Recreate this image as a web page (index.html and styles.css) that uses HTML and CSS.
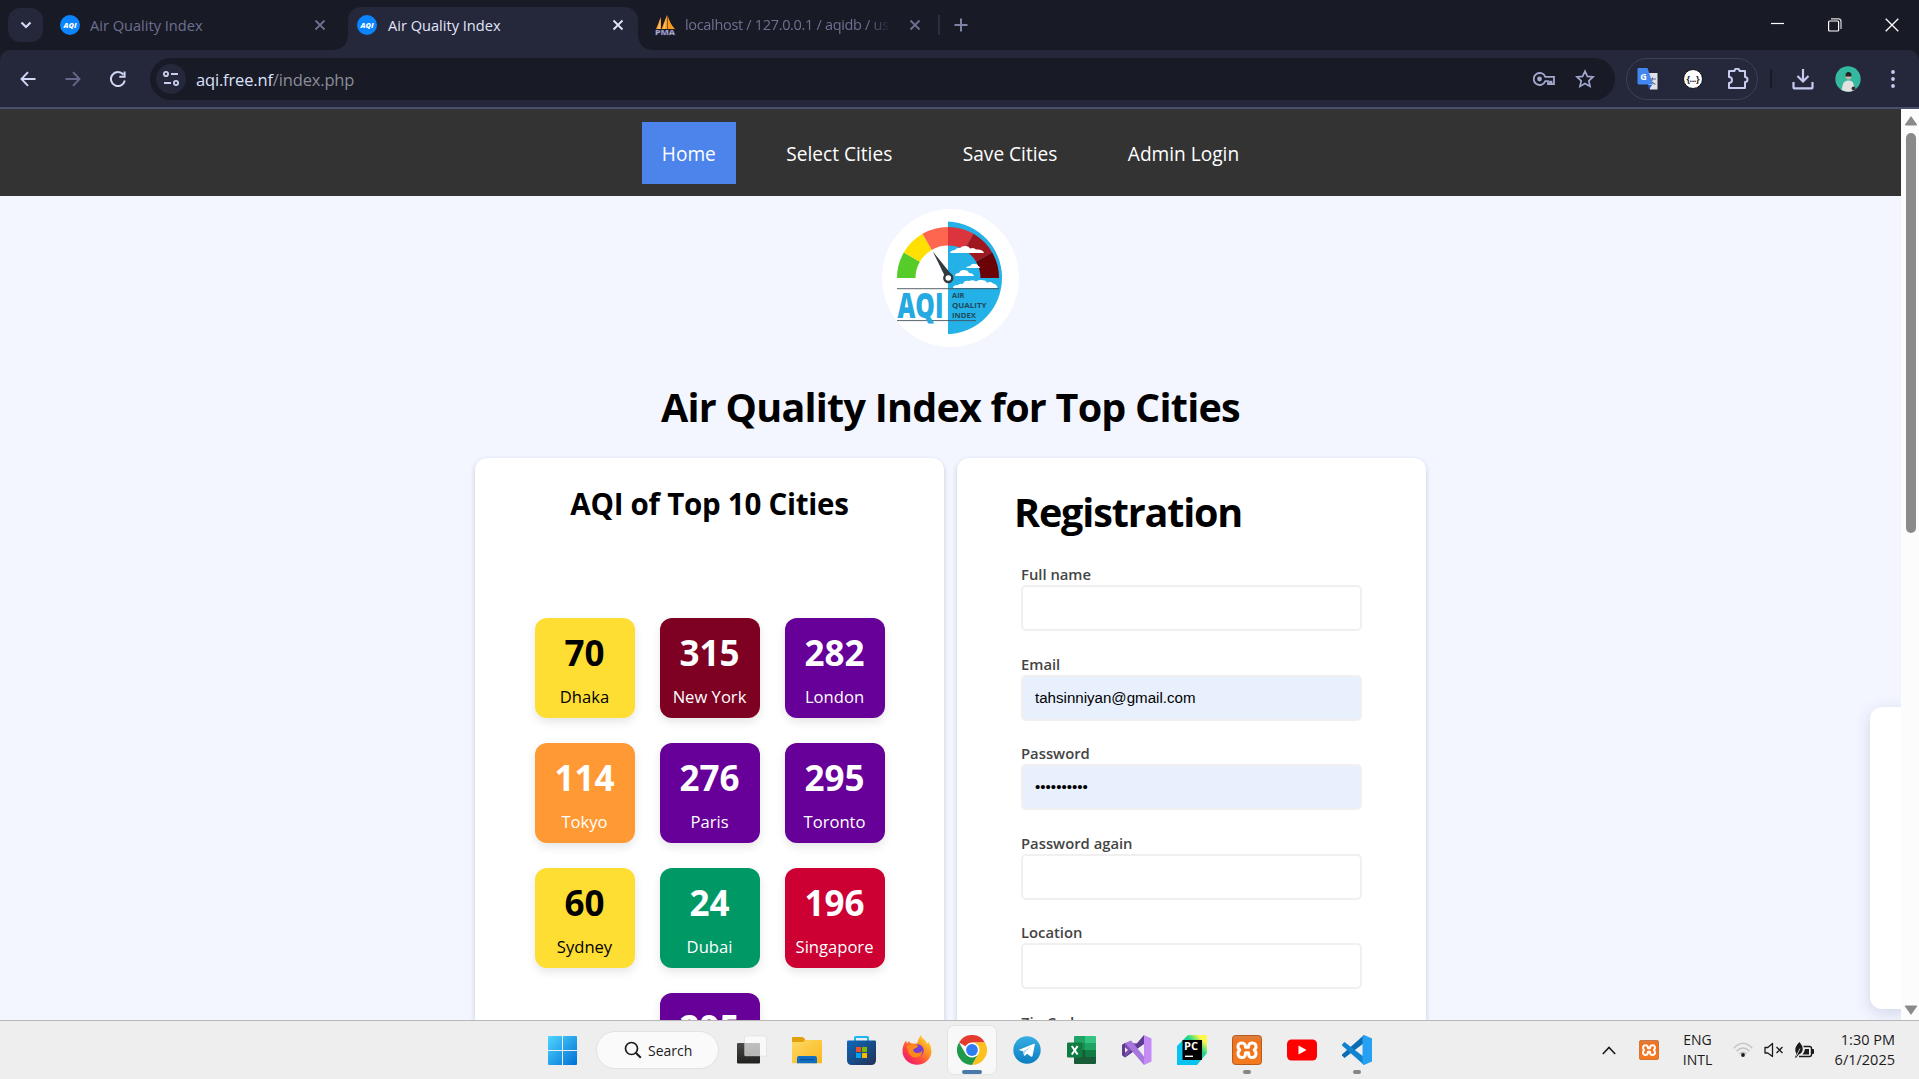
FILE: index.html
```html
<!DOCTYPE html>
<html lang="en">
<head>
<meta charset="utf-8">
<title>Air Quality Index</title>
<link rel="stylesheet" href="styles.css">
</head>
<body>
<svg class="defs" width="0" height="0">
  <defs>
    <linearGradient id="win" x1="0" y1="0" x2="1" y2="1"><stop offset="0" stop-color="#4fd6ff"/><stop offset="1" stop-color="#006fd6"/></linearGradient>
    <linearGradient id="tvb" x1="0" y1="0" x2="0" y2="1"><stop offset="0" stop-color="#4a4a48"/><stop offset="1" stop-color="#20201e"/></linearGradient>
    <linearGradient id="folder" x1="0" y1="0" x2="1" y2="1"><stop offset="0" stop-color="#ffd965"/><stop offset="1" stop-color="#f9b61c"/></linearGradient>
    <linearGradient id="store" x1="0" y1="0" x2="1" y2="1"><stop offset="0" stop-color="#0b69bd"/><stop offset="1" stop-color="#243156"/></linearGradient>
    <linearGradient id="fox" x1="1" y1="0" x2="0.2" y2="1"><stop offset="0" stop-color="#fff04a"/><stop offset=".4" stop-color="#ff9a1f"/><stop offset=".75" stop-color="#ff3c46"/><stop offset="1" stop-color="#e81b78"/></linearGradient>
    <linearGradient id="tg" x1="0" y1="0" x2="0" y2="1"><stop offset="0" stop-color="#38aee4"/><stop offset="1" stop-color="#0c7dc0"/></linearGradient>
    <linearGradient id="pc" x1="0" y1="1" x2="1" y2="0"><stop offset="0.35" stop-color="#07c3f2"/><stop offset=".65" stop-color="#21d789"/><stop offset=".85" stop-color="#fcf84a"/></linearGradient>
    <linearGradient id="xa" x1="0" y1="0" x2="0" y2="1"><stop offset="0" stop-color="#d9824a"/><stop offset=".2" stop-color="#f0711c"/><stop offset="1" stop-color="#f47a20"/></linearGradient>
    <symbol id="fav" viewBox="0 0 20 20"><circle cx="10" cy="10" r="10" fill="#0a84ff"/><text x="3.500" y="12.600" class="fav-text" textLength="13" lengthAdjust="spacingAndGlyphs">AQI</text></symbol>
    <symbol id="x" viewBox="0 0 12 12"><path d="M1.500 1.500l9 9m0-9l-9 9" stroke="currentColor" stroke-width="1.800"/></symbol>
    <symbol id="xampp" viewBox="0 0 30 30"><rect x=".5" y=".5" width="29" height="29" rx="3" fill="url(#xa)" stroke="#b9591a"/><path d="M9.800 8c-4.200 0-5 4.500-2 7-3 2.500-2.200 7.500 2 7.500 2.900 0 3.700-1.500 3.700-4.800h3c0 3.300.8 4.800 3.700 4.800 4.200 0 5-5 2-7.500 3-2.500 2.200-7-2-7-2.900 0-3.700 1.500-3.700 4.300h-3c0-2.800-.8-4.300-3.700-4.300z" fill="none" stroke="#fff" stroke-width="3" stroke-linejoin="round"/></symbol>
  </defs>
</svg>

<header class="browser">
  <div class="tabstrip">
    <div class="tab-menu"><svg width="12" height="8" viewBox="0 0 12 8"><path d="M1.500 1.500L6 6l4.500-4.500" fill="none" stroke="#d3d8f5" stroke-width="2.200"/></svg></div>
    <div class="tab tab-first"><svg class="fav"><use href="#fav"/></svg><span class="tab-title">Air Quality Index</span><svg class="tab-x"><use href="#x"/></svg></div>
    <div class="tab tab-active"><svg class="fav"><use href="#fav"/></svg><span class="tab-title">Air Quality Index</span><svg class="tab-x"><use href="#x"/></svg></div>
    <div class="tab tab-third">
      <svg class="fav" viewBox="0 0 20 20"><path d="M6 2L1 14h5zM12 0L6.500 14H12zM12.500 0v14H20q-5-5-7.500-14z" fill="#f79a1e"/><path d="M5 4L3 14h2zM11 3L8 14h2z" fill="#fcc477"/><text x="0" y="19.600" class="pma-text" textLength="20" lengthAdjust="spacingAndGlyphs">PMA</text></svg>
      <span class="tab-title tab-title-fade">localhost / 127.0.0.1 / aqidb / us</span><svg class="tab-x"><use href="#x"/></svg>
    </div>
    <i class="tab-sep"></i>
    <svg class="new-tab" width="14" height="14" viewBox="0 0 14 14"><path d="M7 .5v13M.5 7h13" stroke="#7f83a5" stroke-width="2"/></svg>
    <div class="win-controls">
      <svg width="14" height="14" viewBox="0 0 14 14"><path d="M0 5.500h13" stroke="#fff" stroke-width="1.200"/></svg>
      <svg width="14" height="14" viewBox="0 0 14 14"><rect x=".6" y="3" width="10" height="10" rx="1" fill="none" stroke="#fff" stroke-width="1.200"/><path d="M3 .8h7.500q2.500 0 2.500 2.500V11" fill="none" stroke="#ddd" stroke-width="1.200"/></svg>
      <svg width="14" height="14" viewBox="0 0 14 14"><path d="M.7.7l12.600 12.600m0-12.600L.7 13.300" stroke="#fff" stroke-width="1.300"/></svg>
    </div>
  </div>
  <div class="toolbar">
    <div class="nav-icons">
      <svg width="16" height="16" viewBox="0 0 16 16"><path d="M15.500 8H1.800M8 1.200L1.500 8 8 14.800" fill="none" stroke="#d0d6f5" stroke-width="1.900"/></svg>
      <svg width="16" height="16" viewBox="0 0 16 16"><path d="M.5 8h13.700M8 1.200L14.500 8 8 14.800" fill="none" stroke="#64688a" stroke-width="1.900"/></svg>
      <svg width="16" height="16" viewBox="0 0 16 16"><path d="M13.300 3.500A7 7 0 1 0 14.800 9.500M14.600 .5v5.200H9.300" fill="none" stroke="#d0d6f5" stroke-width="2"/></svg>
    </div>
    <div class="omnibox">
      <span class="site-btn"><svg width="16" height="15" viewBox="0 0 16 15"><g fill="none" stroke="#c6cceb" stroke-width="1.900"><circle cx="3" cy="3" r="2.100"/><path d="M8 3h7M1 12h7"/><circle cx="13" cy="12" r="2.100"/></g></svg></span>
      <span class="url">aqi.free.nf<span class="path">/index.php</span></span>
      <svg class="key" width="23" height="14" viewBox="0 0 23 14"><g fill="none" stroke="#a2a7cc" stroke-width="1.800"><path d="M12.300 4.800A6 6 0 1 0 12.300 9.200H15v3h2v-2.500h1.500v2.500H21V4.800z"/></g><circle cx="6.500" cy="7" r="2.400" fill="#a2a7cc"/></svg>
      <svg width="20" height="20" viewBox="0 0 20 20"><path d="M10 2.200l2.400 5.200 5.600.6-4.200 3.800 1.200 5.600L10 14.500l-5 2.900 1.200-5.600L2 8l5.600-.6z" fill="none" stroke="#a2a7cc" stroke-width="1.700"/></svg>
    </div>
    <div class="ext-pill">
      <svg width="22" height="22" viewBox="0 0 22 22"><path d="M8 5h12.500v16.500H13z" fill="#dfe1e6"/><path d="M12 11h7M15.500 9.500V11q-.5 3-3 5M13.500 12q2 3.500 5 4.500" fill="none" stroke="#60708a" stroke-width="1.200"/><path d="M1 0h9.500L16 16.500H2q-1.500 0-1.500-1.500V1z" fill="#4286f0"/><path d="M11 17h4l-3 4.500z" fill="#2a52c8"/><text x="3.200" y="12" class="g-text">G</text></svg>
      <svg width="20" height="20" viewBox="0 0 20 20"><circle cx="10" cy="10" r="9.500" fill="#fff" stroke="#111"/><text x="3.500" y="13.200" class="brace" textLength="13">{...}</text></svg>
      <svg width="22" height="22" viewBox="0 0 22 22"><path d="M2 3h5.500c0-3 5-3 5 0H18v6c3.300 0 3.300 5 0 5v6H2v-5c4 0 4-6 0-6z" fill="none" stroke="#c6cbf0" stroke-width="2" stroke-linejoin="round"/></svg>
    </div>
    <i class="bar-sep"></i>
    <svg class="download" width="22" height="22" viewBox="0 0 22 22"><path d="M11 1v12M5.500 8l5.500 5.500L16.500 8M1.500 14v5.500q0 .8.800.8h17.400q.8 0 .8-.8V14" fill="none" stroke="#c6cbf0" stroke-width="2.200"/></svg>
    <svg class="avatar" width="26" height="26" viewBox="0 0 26 26"><circle cx="13" cy="13" r="12.700" fill="#35b8a0"/><path d="M6.500 24l1.500-6q1-3.500 5.500-3.500t5 3.500l1.500 6q-3 1.700-6.500 1.700T6.500 24z" fill="#e4e2e0"/><circle cx="13.500" cy="10.500" r="2.900" fill="#c9b3a6"/><path d="M10.500 9.500q0-3.500 3-3.500t3 3.500l-.3 1H10.800z" fill="#222"/><circle cx="18.500" cy="22.500" r="2" fill="#333"/></svg>
    <svg width="4" height="20" viewBox="0 0 4 20"><g fill="#c6cbf0"><circle cx="2" cy="3" r="1.900"/><circle cx="2" cy="10" r="1.900"/><circle cx="2" cy="17" r="1.900"/></g></svg>
  </div>
</header>

<div class="viewport">
  <main class="page">
    <nav class="site-nav">
      <a class="current">Home</a><a>Select Cities</a><a>Save Cities</a><a>Admin Login</a>
    </nav>
    <svg class="logo" width="137" height="138" viewBox="22 14 137 138">
      <ellipse cx="90.500" cy="83" rx="68.500" ry="69" fill="#fff"/>
      <path d="M88 26.500a56.400 56.400 0 0 1 0 112.700z" fill="#24b1e8"/>
      <path d="M88 83H55.500a32.500 32.500 0 0 1 32.500-32.500z" fill="#fff"/>
      <path d="M37 83A51 51 0 0 1 43.800 57.500L59.900 66.750A32.500 32.500 0 0 0 55.500 83z" fill="#55cc28"/>
      <path d="M43.800 57.500A51 51 0 0 1 62.500 38.800L71.750 54.900A32.500 32.500 0 0 0 59.900 66.750z" fill="#ffe000"/>
      <path d="M62.500 38.800A51 51 0 0 1 88 32V50.500A32.500 32.500 0 0 0 71.750 54.900z" fill="#ff6650"/>
      <path d="M88 32A51 51 0 0 1 113.500 38.800L104.250 54.900A32.500 32.500 0 0 0 88 50.500z" fill="#dc343c"/>
      <path d="M113.500 38.800A51 51 0 0 1 132.200 57.500L116.100 66.750A32.500 32.500 0 0 0 104.250 54.900z" fill="#a0181f"/>
      <path d="M132.200 57.500A51 51 0 0 1 139 83H120.500A32.500 32.500 0 0 0 116.100 66.750z" fill="#6b0206"/>
      <g fill="#fff">
        <path d="M90 58q1-3 5-3 1-2.500 5-2 2-2.500 6-2 3 0 4 2.500 4-1.500 6 1 7-.5 8 3.500z"/>
        <path d="M106 73q1-2 4-2 2-3 5-2 3 0 3 2h1l1 2z"/>
        <path d="M95 81q0-3 4-3 1-3 5-3t5 3q4 0 5 3z"/>
        <path d="M93 93q0-3 5-3 2-2 5-1 1-4 6-3 4-1.500 7 .5 3-2 7-1.200 3 0 4 2.400 4-1.500 6 .8 4 .5 4.500 4.500z"/>
      </g>
      <path d="M72.800 56.500L91 79l-5.500 3.500z" fill="#333b40"/>
      <circle cx="88.300" cy="83" r="4" fill="#fff" stroke="#333b40" stroke-width="2.400"/>
      <path d="M37 93.700h102M37 125.600h79" stroke="#45545c" stroke-width=".9"/>
      <text x="37.500" y="122.500" class="logo-aqi" textLength="46" lengthAdjust="spacingAndGlyphs">AQI</text>
      <g class="logo-words" lengthAdjust="spacingAndGlyphs"><text x="92" y="102.700" textLength="12.500" lengthAdjust="spacingAndGlyphs">AIR</text><text x="92" y="112.700" textLength="34.500" lengthAdjust="spacingAndGlyphs">QUALITY</text><text x="92" y="122.700" textLength="24" lengthAdjust="spacingAndGlyphs">INDEX</text></g>
    </svg>
    <h1 class="title">Air Quality Index for Top Cities</h1>
    <div class="cards">
      <section class="card cities">
        <h2>AQI of Top 10 Cities</h2>
        <div class="tiles">
          <div class="tile yellow"><b>70</b><span>Dhaka</span></div>
          <div class="tile maroon"><b>315</b><span>New York</span></div>
          <div class="tile purple"><b>282</b><span>London</span></div>
          <div class="tile orange"><b>114</b><span>Tokyo</span></div>
          <div class="tile purple"><b>276</b><span>Paris</span></div>
          <div class="tile purple"><b>295</b><span>Toronto</span></div>
          <div class="tile yellow"><b>60</b><span>Sydney</span></div>
          <div class="tile green"><b>24</b><span>Dubai</span></div>
          <div class="tile red"><b>196</b><span>Singapore</span></div>
          <div class="tile purple"><b>295</b></div>
        </div>
      </section>
      <section class="card register">
        <h2>Registration</h2>
        <div class="field"><label>Full name</label><div class="input"></div></div>
        <div class="field"><label>Email</label><div class="input filled">tahsinniyan@gmail.com</div></div>
        <div class="field"><label>Password</label><div class="input filled">••••••••••</div></div>
        <div class="field"><label>Password again</label><div class="input"></div></div>
        <div class="field"><label>Location</label><div class="input"></div></div>
        <div class="field"><label>Zip Code</label><div class="input"></div></div>
      </section>
    </div>
    <aside class="side-panel"></aside>
  </main>
  <div class="scrollbar">
    <svg width="14" height="11" viewBox="0 0 14 11"><path d="M7 1l6 8.500q.3 1-.8 1H1.800q-1.100 0-.8-1z" fill="#8a8a8a"/></svg>
    <i class="thumb"></i>
    <svg width="14" height="11" viewBox="0 0 14 11"><path d="M7 10l6-8.500q.3-1-.8-1H1.800q-1.100 0-.8 1z" fill="#8a8a8a"/></svg>
  </div>
</div>

<footer class="taskbar">
  <div class="apps">
    <div class="app"><svg width="29" height="29" viewBox="0 0 29 29"><path d="M0 1q0-1 1-1h13v14H0zM15 0h13q1 0 1 1v13H15zM0 15h14v14H1q-1 0-1-1zM15 15h14v13q0 1-1 1H15z" fill="url(#win)"/></svg></div>
    <div class="search"><svg width="18" height="18" viewBox="0 0 18 18"><path d="M11.800 11.800l5 5" stroke="#1b1b1b" stroke-width="2"/><circle cx="7.500" cy="7.500" r="6" fill="none" stroke="#1b1b1b" stroke-width="1.700"/></svg><span>Search</span></div>
    <div class="app"><svg width="30" height="30" viewBox="0 0 30 30"><rect x="0" y="8" width="23" height="20.500" rx="1" fill="url(#tvb)"/><rect x="7.500" y="1" width="22" height="20" rx="1" fill="#fff" fill-opacity=".65" stroke="#ccc" stroke-opacity=".6" stroke-width=".6"/></svg></div>
    <div class="app"><svg width="30" height="30" viewBox="0 0 30 30"><path d="M0 3q0-1 1-1h9q1 0 2 1l1.500 2V8H0z" fill="#dfa00c"/><path d="M0 7h11l2-2h16q1 0 1 1v21.500q0 .8-.8.800H1q-1 0-1-1z" fill="url(#folder)"/><path d="M5 28.300v-5q0-2.300 2-2.300h16q2 0 2 2.300v5z" fill="#0f6fc4"/><path d="M8 24.600h14" stroke="#084f94" stroke-width="1.300"/></svg></div>
    <div class="app"><svg width="29" height="29" viewBox="0 0 29 29"><path d="M8 6V1.500Q8 1 8.800 1h11.400q.8 0 .8.500V6" fill="none" stroke="#1fb6ee" stroke-width="2"/><path d="M0 5.500q0-1 1-1h27q1 0 1 1V24q0 5-5 5H5q-5 0-5-5z" fill="url(#store)"/><path d="M9 11h5v5H9z" fill="#f25022"/><path d="M15 11h5v5h-5z" fill="#7fba00"/><path d="M9 17h5v5H9z" fill="#00a4ef"/><path d="M15 17h5v5h-5z" fill="#ffb900"/></svg></div>
    <div class="app"><svg width="30" height="30" viewBox="0 0 30 30"><path d="M18.500 0q1.500 3.500 4.500 5 1.500 2 2 4l1.500-2q3 4 3 9a14.500 13.800 0 0 1-29 0Q.5 10 4 5.500L5 8.500 6.800 6q1.200 2 3.200 2.500L15 8.500q1.500-5 3.500-8.500z" fill="url(#fox)"/><circle cx="15.500" cy="15.500" r="6.200" fill="#7a3fd0"/><path d="M5 11q6-2.500 9-1.500 3 1 1 3l-3.500 1.500q-1 3 3 4 4 .5 6-2.500-.5 7-7.500 7-7-.5-8-11.500z" fill="#ff8a1c"/></svg></div>
    <div class="app focused"><svg width="30" height="30" viewBox="0 0 30 30"><path d="M15 15L2 7.500A15 15 0 0 1 28 7.500H15z" fill="#e33b2e"/><path d="M2 7.500A15 15 0 0 0 15 30L21.500 18.700 15 15 8.500 18.700z" fill="#1f9a4b"/><path d="M28 7.500A15 15 0 0 1 15 30L21.500 18.700 21.500 11 15 7.500z" fill="#fcc01f"/><circle cx="15" cy="15" r="7.500" fill="#fff"/><circle cx="15" cy="15" r="5.900" fill="#2f7df0"/></svg><i class="mark wide"></i></div>
    <div class="app"><svg width="28" height="28" viewBox="0 0 28 28"><circle cx="14" cy="14" r="13.700" fill="url(#tg)"/><path d="M5.500 14L21 7.700q1-.2.800 1L19.500 20q-.4 1.200-1.600.5L14 17.700l-2 2q-.8.500-1-.5l-.8-4-4.500-1.200z" fill="#fff"/><path d="M10.300 15.300l8-5-6.300 6-1 3.400z" fill="#b5d5ea"/></svg></div>
    <div class="app"><svg width="30" height="28" viewBox="0 0 30 28"><path d="M7 1q0-1 1-1h10v14H7z" fill="#21a366"/><path d="M18 0h10q1 0 1 1v6.500H18z" fill="#33c481"/><path d="M7 7h11v7H7z" fill="#169154"/><path d="M18 7h11v7H18z" fill="#21a366"/><path d="M18 14h11v7H18z" fill="#107c41"/><path d="M7 14h11v7h11v6q0 1-1 1H8q-1 0-1-1z" fill="#185c37"/><rect x="0" y="6.500" width="15.500" height="15" rx="1.200" fill="#107c41"/><path d="M4.800 10l5.800 8.500M10.600 10l-5.800 8.500" stroke="#fff" stroke-width="2"/></svg></div>
    <div class="app"><svg width="30" height="30" viewBox="0 0 30 30"><path d="M22 0l7.500 3.500V26.500L22 30z" fill="#c58bf5"/><path d="M22 8.500L3 22.500 0 20V10l3-2z" fill="#7a4fb0"/><path d="M0 10l3-2v14.500L0 20zM3 22.500L22 0v9z" fill="#5f3c93"/><path d="M3 8L9 5.500 22 21.500V30z" fill="#a676dc"/><path d="M3 12.500v5l3-2.500z" fill="#eee"/></svg></div>
    <div class="app"><svg width="30" height="30" viewBox="0 0 30 30"><path d="M0 11L10 1q1-1 2-1h18v18L20 30H0z" fill="url(#pc)"/><rect x="5.500" y="5" width="19.500" height="20" fill="#000"/><text x="7" y="14.800" class="pc-text" textLength="14" lengthAdjust="spacingAndGlyphs">PC</text><path d="M8 21.300h8" stroke="#fff" stroke-width="1.400"/></svg></div>
    <div class="app"><svg width="30" height="30"><use href="#xampp"/></svg><i class="mark"></i></div>
    <div class="app"><svg width="30" height="22" viewBox="0 0 30 22"><rect y=".5" width="30" height="21" rx="4.500" fill="#f00"/><path d="M11.500 6.500l8 4.500-8 4.500z" fill="#fff"/></svg></div>
    <div class="app"><svg width="30" height="30" viewBox="0 0 30 30"><path d="M22 8L2.500 23 0 20.500v-1L22 0z" fill="#0b6cb4"/><path d="M22 22L2.500 7 0 9.500v1L22 30z" fill="#1184cf"/><path d="M22 0l8 3.500v23L22 30l-1.500-1.500V1.500z" fill="#25a0f2"/></svg><i class="mark"></i></div>
  </div>
  <div class="tray">
    <svg width="14" height="9" viewBox="0 0 14 9"><path d="M.8 8L7 1.500 13.200 8" fill="none" stroke="#1b1b1b" stroke-width="1.600"/></svg>
    <svg class="tx" width="20" height="20"><use href="#xampp"/></svg>
    <div class="lang"><span>ENG</span><span>INTL</span></div>
    <svg class="wifi" width="20" height="16" viewBox="0 0 20 16"><g fill="none" stroke="#c2c2c2" stroke-width="1.400"><path d="M.7 6.200Q10-3.500 19.300 6.200M3.500 9.200q6.500-6.500 13 0M6.300 12Q10 8.300 13.700 12"/></g><circle cx="10" cy="13" r="1.900" fill="#1b1b1b"/></svg>
    <svg class="vol" width="20" height="16" viewBox="0 0 20 16"><path d="M1 5.500h2.800L8.500 1.500v13L3.800 11H1zM12.500 5l6 6m0-6l-6 6" fill="none" stroke="#1b1b1b" stroke-width="1.300" stroke-linejoin="round"/></svg>
    <svg class="bat" width="21" height="17" viewBox="0 0 21 17"><path d="M9.500 4.500h6q2 0 2 2v6q0 2-2 2H5" fill="none" stroke="#1b1b1b" stroke-width="1.400"/><path d="M11 7h4v5.500H8.500q2-2.500 2.500-5.500z" fill="#1b1b1b"/><path d="M18 7.500h1.500v4H18z" fill="#1b1b1b" stroke="#1b1b1b"/><path d="M5.500 0Q9 4 8.700 7.500q-.4 4-4 5L2 16l-1-1 1.500-3Q-1 6 5.500 0z" fill="#1b1b1b"/><path d="M2 14.500L6 6.500" stroke="#eee" stroke-width=".8"/></svg>
    <div class="clock"><span>1:30 PM</span><span>6/1/2025</span></div>
  </div>
</footer>
</body>
</html>
```
FILE: styles.css
```css
* { box-sizing: border-box; }
body {
  margin: 0; width: 1919px; height: 1079px; overflow: hidden;
  display: flex; flex-direction: column;
  font-family: "Open Sans", "Noto Sans", sans-serif; background: #f3f6ff;
}
svg { display: block; flex: none; }
.defs { position: absolute; }
i { display: block; flex: none; }

/* browser frame */
.browser { height: 109px; flex: none; background: #181a26; border-bottom: 2px solid #4c4f6b; }
.tabstrip { height: 50px; display: flex; align-items: center; color: #6d7090; }
.tab-menu { width: 35px; height: 34px; margin-left: 8px; border-radius: 12px; background: #25273a; display: grid; place-items: center; }
.tab { display: flex; align-items: center; height: 43px; align-self: flex-end; padding-bottom: 7px; }
.tab-first { width: 305px; padding-left: 17px; padding-right: 22px; }
.tab-active {
  width: 290px; padding-left: 9px; padding-right: 14px; color: #e2e6fb;
  background: #25273a; border-radius: 13px 13px 0 0; position: relative;
}
.tab-active::before, .tab-active::after { content: ""; position: absolute; bottom: 0; width: 14px; height: 14px; }
.tab-active::before { left: -14px; background: radial-gradient(circle at 0 0, transparent 13.500px, #25273a 14px); }
.tab-active::after { right: -14px; background: radial-gradient(circle at 100% 0, transparent 13.500px, #25273a 14px); }
.tab-third { width: 300px; padding-left: 17px; padding-right: 17px; }
.fav { width: 20px; height: 20px; overflow: visible; }
.fav-text { font: italic 800 7.500px "Open Sans", sans-serif; fill: #fff; }
.pma-text { font: 800 7.500px "Open Sans", sans-serif; fill: #b9bcdc; stroke: #4a4c78; stroke-width: .4; }
.tab-title { flex: 1; margin-left: 10px; font-size: 14.600px; white-space: nowrap; overflow: hidden; line-height: 22px; }
.tab-active .tab-title { margin-left: 11px; }
.tab-title-fade { flex: none; width: 207px; font-size: 14.500px; letter-spacing: -.32px; -webkit-mask-image: linear-gradient(90deg, #000 88%, transparent 100%); }
.tab-x { width: 12px; height: 12px; }
.tab-third .tab-x { margin-left: 17px; }
.tab-sep { width: 2px; height: 20px; background: #2b2d42; }
.new-tab { margin-left: 14px; }
.win-controls { margin-left: auto; padding-right: 20px; display: flex; gap: 43px; }

.toolbar { height: 57px; background: #25273a; border-radius: 10px 10px 0 0; display: flex; align-items: center; }
.nav-icons { display: flex; gap: 29px; padding-left: 20px; width: 150px; }
.omnibox { width: 1465px; height: 42px; border-radius: 21px; background: #181a26; display: flex; align-items: center; padding: 0 20px 0 6px; }
.site-btn { width: 30px; height: 30px; border-radius: 50%; background: #25273a; display: grid; place-items: center; }
.url { margin-left: 10px; padding-top: 2px; font-size: 16.500px; letter-spacing: -.16px; color: #dce1fb; }
.path { color: #8b8d98; }
.key { margin-left: auto; margin-right: 19px; }
.ext-pill { width: 132px; height: 42px; margin-left: 11px; border: 1px solid #3e4058; border-radius: 21px; display: flex; align-items: center; justify-content: space-between; padding: 0 8px 0 10px; }
.g-text { font: 700 9px "Open Sans", sans-serif; fill: #fff; }
.brace { font: 700 9px "Open Sans", sans-serif; fill: #222; }
.bar-sep { width: 2px; height: 19px; margin-left: 12px; background: #181a26; }
.download { margin-left: 20px; }
.avatar { margin: 0 30px 0 21px; }

/* page */
.viewport { flex: 1; min-height: 0; display: flex; overflow: hidden; }
.page { width: 1901px; position: relative; overflow: hidden; display: flex; flex-direction: column; align-items: center; background: #f3f6ff; }
.site-nav { width: 100%; height: 87px; flex: none; background: #333; display: flex; justify-content: center; align-items: center; gap: 30.500px; }
.site-nav a { height: 62px; padding: 3px 20px 0; color: #fff; font-size: 19.100px; display: flex; align-items: center; }
.site-nav .current { background: #4d84ec; }
.logo { margin-top: 13px; }
.logo-aqi { font: 800 36px "Open Sans", sans-serif; fill: #24a9e0; }
.logo-words text { font: 700 7.800px "Open Sans", sans-serif; fill: #1f4a5c; }
.title { margin: 32px 0 0; height: 79px; flex: none; line-height: 56px; font-size: 39.500px; letter-spacing: -.76px; word-spacing: 0; font-weight: 700; white-space: nowrap; }
.cards { display: flex; gap: 13px; }
.card { width: 469px; height: 900px; background: #fff; border-radius: 12px; box-shadow: 0 2px 5px rgba(40, 50, 90, .22); }
.cities h2 { margin: 25px 0 0; text-align: center; font-size: 29.500px; letter-spacing: -.25px; line-height: 42px; white-space: nowrap; }
.tiles { margin: 93px auto 0; width: 350px; display: flex; flex-wrap: wrap; justify-content: center; gap: 25px; }
.tile { width: 100px; height: 100px; border-radius: 12px; color: #fff; display: flex; flex-direction: column; align-items: center; padding-top: 11px; box-shadow: 0 4px 10px rgba(0, 0, 0, .1); white-space: nowrap; }
.tile b { font-size: 35px; line-height: 48px; }
.tile span { font-size: 16.600px; line-height: 24px; margin-top: 8px; }
.yellow { background: #ffde33; color: #000; }
.maroon { background: #7e0023; }
.purple { background: #660099; }
.orange { background: #ff9933; }
.green { background: #009966; }
.red { background: #cc0033; }
.register { padding: 27px 64px 0; }
.register h2 { margin: 0 0 23px -7px; font-size: 39.500px; letter-spacing: -1.150px; line-height: 54px; }
.field { height: 89.500px; }
.field label { display: block; height: 23px; padding-top: 1px; font-size: 14.800px; font-weight: 600; line-height: 23px; color: #444; }
.input { height: 46px; border: 2px solid #f0f0f0; border-radius: 5px; padding: 0 12px; font: 15.100px/42px "Liberation Sans", sans-serif; color: #000; }
.filled { background: #e8f0fe; }
.side-panel { position: absolute; left: 1870px; top: 598px; width: 60px; height: 302px; border-radius: 12px; background: #fff; box-shadow: 0 4px 16px rgba(40, 50, 100, .16); }
.scrollbar { width: 18px; background: #fcfcfc; display: flex; flex-direction: column; align-items: center; padding: 6px 0 4px 1px; }
.thumb { width: 10px; height: 400px; margin: 7px 0 auto; border-radius: 5px; background: #8a8a8a; }

/* taskbar */
.taskbar { height: 59px; flex: none; background: #eee; border-top: 1px solid #b8b8b8; display: flex; justify-content: space-between; color: #1b1b1b; font-size: 14px; }
.apps { display: flex; align-items: center; padding-left: 535px; height: 58px; }
.app { width: 55px; height: 48px; display: flex; flex-direction: column; align-items: center; justify-content: center; position: relative; }
.search { width: 123px; height: 38px; margin: 0 5px 0 6px; border-radius: 19px; background: #fafafa; border: 1px solid #e2e2e2; display: flex; align-items: center; padding-left: 27px; gap: 6px; }
.focused { width: 48px; margin: 0 3.500px; background: #f8f8f8; border-radius: 6px; box-shadow: 0 0 0 1px #e4e4e4; }
.mark { position: absolute; bottom: 0; width: 8px; height: 4px; border-radius: 2px; background: #868686; }
.wide { width: 20px; background: #4a78a8; }
.tray { display: flex; align-items: center; padding-right: 24px; height: 58px; }
.tx { margin-left: 23px; }
.lang { margin-left: 23px; width: 31px; display: flex; flex-direction: column; align-items: center; line-height: 20px; }
.wifi { margin-left: 20px; }
.vol { margin-left: 11px; }
.bat { margin-left: 10px; }
.clock { width: 80px; display: flex; flex-direction: column; align-items: flex-end; line-height: 20px; font-size: 14.500px; }
.pc-text { font: 700 10px "Open Sans", sans-serif; fill: #fff; }
```
